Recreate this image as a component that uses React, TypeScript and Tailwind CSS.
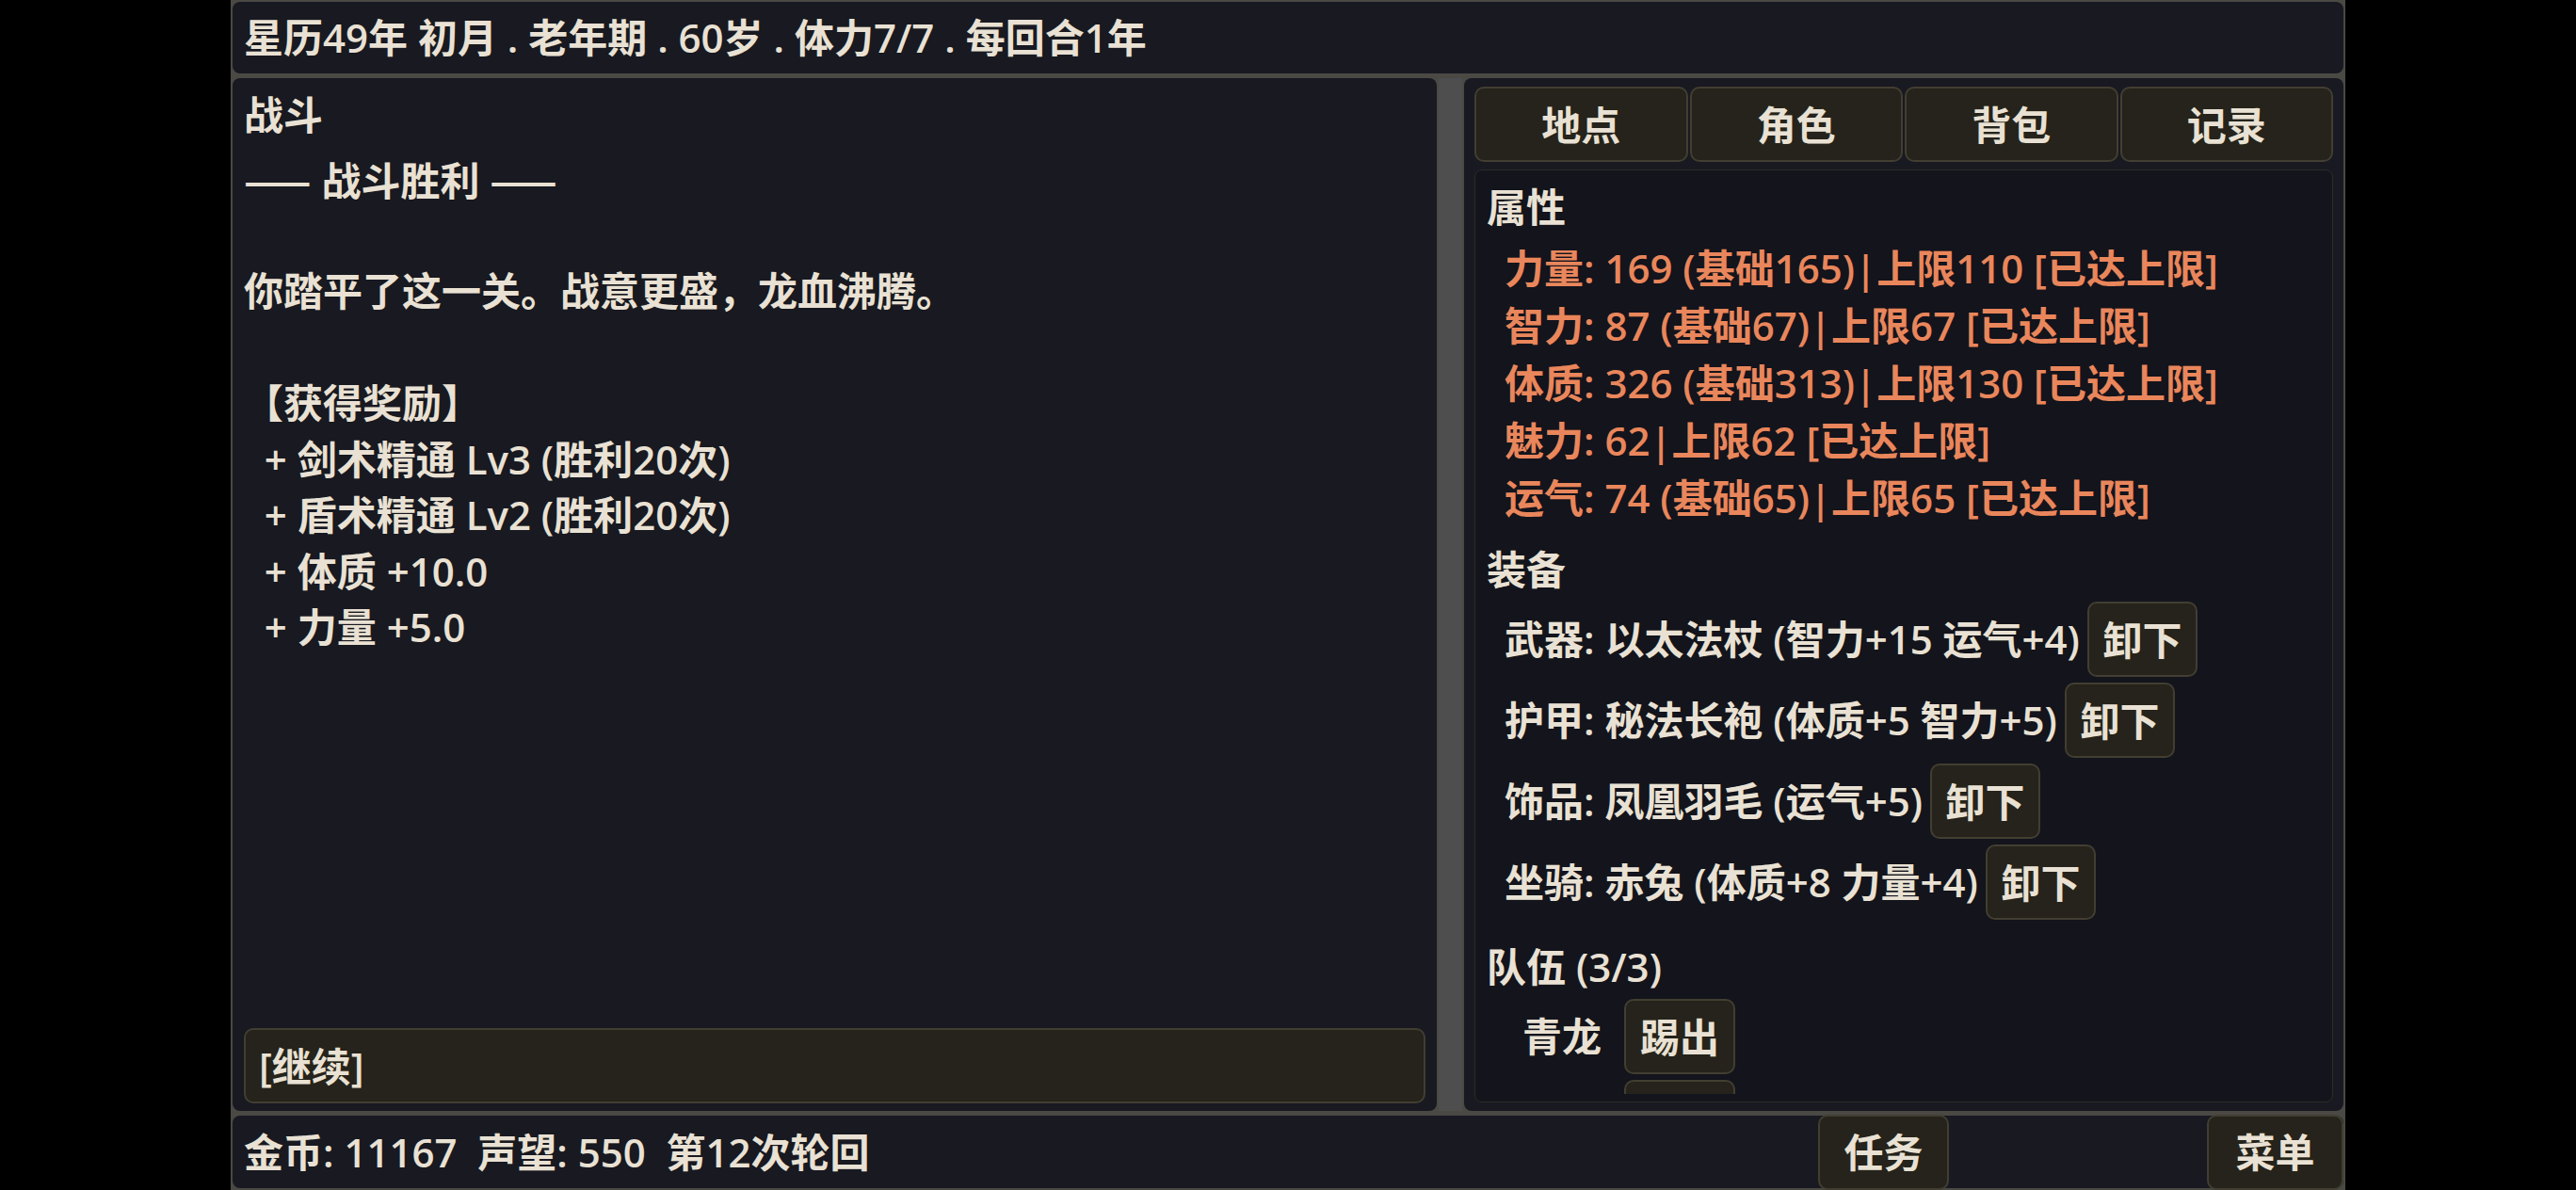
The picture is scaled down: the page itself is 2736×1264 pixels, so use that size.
import React from "react";

const font = "font-['Open_Sans','Noto_Sans_CJK_SC',sans-serif]";
const cjk = "font-['Noto_Sans_CJK_SC',sans-serif]";

const attrs = [
  "力量: 169 (基础165)|上限110 [已达上限]",
  "智力: 87 (基础67)|上限67 [已达上限]",
  "体质: 326 (基础313)|上限130 [已达上限]",
  "魅力: 62|上限62 [已达上限]",
  "运气: 74 (基础65)|上限65 [已达上限]",
];

const gear = [
  "武器: 以太法杖 (智力+15 运气+4)",
  "护甲: 秘法长袍 (体质+5 智力+5)",
  "饰品: 凤凰羽毛 (运气+5)",
  "坐骑: 赤兔 (体质+8 力量+4)",
];

const party = ["青龙", ""];

const logLines = [
  "",
  "",
  "你踏平了这一关。战意更盛，龙血沸腾。",
  "",
  "【获得奖励】",
  "  + 剑术精通 Lv3 (胜利20次)",
  "  + 盾术精通 Lv2 (胜利20次)",
  "  + 体质 +10.0",
  "  + 力量 +5.0",
];

function Btn({ children, className = "" }: { children?: React.ReactNode; className?: string }) {
  return (
    <button
      className={`h-[80px] shrink-0 rounded-[10px] border-2 border-[#423e31] bg-[#25231b] text-[#e9e1d3] ${className}`}
    >
      {children}
    </button>
  );
}

export default function App() {
  return (
    <div className={`min-h-[1264px] bg-black ${font} text-[42px] font-semibold text-[#e9e1d3]`}>
      <div className="mx-auto flex h-[1264px] w-[2246px] flex-col gap-[5px] bg-[#4a4944] p-[2px]">
        {/* status bar */}
        <div className="flex h-[76px] shrink-0 items-center rounded-[8px] bg-[#181921] px-3 leading-[60px]">
          星历49年 初月 . 老年期 . 60岁 . 体力7/7 . 每回合1年
        </div>

        {/* main area */}
        <div className="flex h-[1097px] shrink-0">
          {/* story log */}
          <div className="flex w-[1279px] flex-col rounded-[8px] bg-[#181921] px-3 pt-[9px] pb-[8px]">
            <div className="mb-[8px] leading-[60px]">战斗</div>
            <div className="min-h-0 flex-1 overflow-hidden">
              {logLines.map((l, i) => (
                <div key={i} className="h-[59.5px] whitespace-pre leading-[59.5px]">
                  {i === 0 ? (
                    <>
                      <span className={cjk}>——</span> 战斗胜利 <span className={cjk}>——</span>
                    </>
                  ) : (
                    l
                  )}
                </div>
              ))}
            </div>
            <button className="flex h-[80px] w-full items-center rounded-[10px] border-2 border-[#423e31] bg-[#25231b] px-[14px] text-left text-[#e9e1d3]">
              [继续]
            </button>
          </div>

          <div className="w-[29px] px-[2px]">
            <div className="h-full bg-[#4e4e4e]" />
          </div>

          {/* side panel */}
          <div className="flex min-w-0 flex-1 flex-col gap-[8px] rounded-[8px] bg-[#181921] px-[11px] pt-[9px] pb-[9px]">
            <div className="grid grid-cols-4 gap-[2px]">
              {["地点", "角色", "背包", "记录"].map((t) => (
                <Btn key={t} className="w-full">
                  {t}
                </Btn>
              ))}
            </div>

            <div className="flex min-h-0 flex-1 flex-col rounded-[8px] border border-[#2d2c2a] bg-[#13141c] px-3 pt-[9px] pb-[8px]">
              <div className="min-h-0 flex-1 overflow-hidden">
                <div className="mb-[4px] leading-[60px]">属性</div>
                {attrs.map((a) => (
                  <div key={a} className="whitespace-pre pl-[19px] leading-[61px] text-[#e9865b]">
                    {a}
                  </div>
                ))}

                <div className="mt-[16px] mb-[4px] leading-[60px]">装备</div>
                <div className="flex flex-col gap-[6px]">
                  {gear.map((g) => (
                    <div key={g} className="flex items-center gap-[8px] pl-[19px]">
                      <span className="leading-[60px]">{g}</span>
                      <Btn className="w-[117px]">卸下</Btn>
                    </div>
                  ))}
                </div>

                <div className="mt-[20px] mb-[4px] leading-[60px]">队伍 (3/3)</div>
                <div className="flex flex-col gap-[6px]">
                  {party.map((p, i) => (
                    <div key={i} className="flex items-center gap-[24px] pl-[38px]">
                      <span className="w-[84px] leading-[60px]">{p}</span>
                      <Btn className="w-[118px]">{p ? "踢出" : ""}</Btn>
                    </div>
                  ))}
                </div>
              </div>
            </div>
          </div>
        </div>

        {/* bottom bar */}
        <div className="flex h-[77px] shrink-0 items-center rounded-[8px] bg-[#181921] pl-3">
          <div className="flex-1 whitespace-pre leading-[60px]">金币: 11167  声望: 550  第12次轮回</div>
          <Btn className="w-[139px]">任务</Btn>
          <div className="w-[274px]" />
          <Btn className="w-[145px]">菜单</Btn>
        </div>
      </div>
    </div>
  );
}
